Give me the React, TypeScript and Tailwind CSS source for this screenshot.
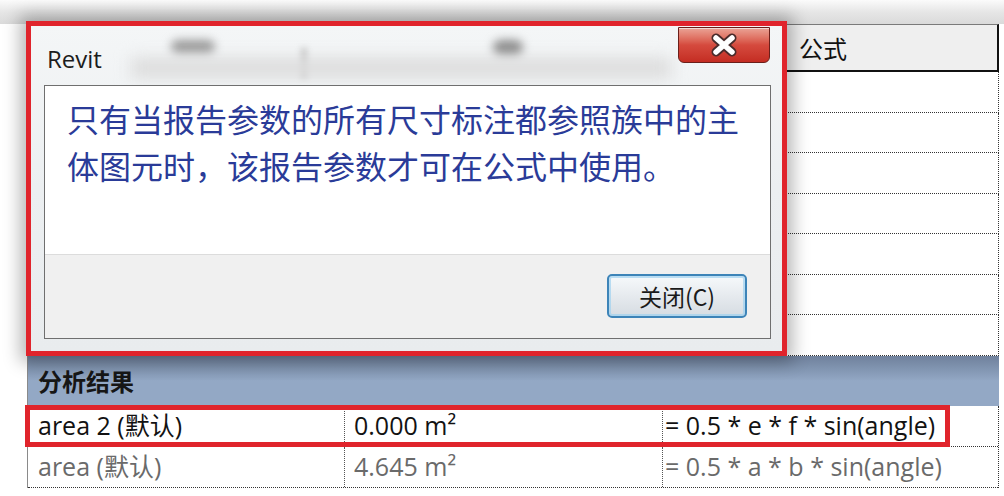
import React from "react"

const latin = "font-['Open_Sans','Noto_Sans_CJK_SC',sans-serif]"
const cjk = "font-['Noto_Sans_CJK_SC','Noto_Sans',sans-serif]"

const emptyRows = [0, 1, 2, 3, 4, 5, 6]

function ResultRow({ name, value, formula, muted }: { name: string; value: string; formula: string; muted?: boolean }) {
  const tone = muted ? "text-[#6a6a6a]" : "text-[#121212]"
  return (
    <div className={`flex h-[41px] border-b border-dotted border-[#333] ${latin} text-[25px] ${tone}`}>
      <div className="flex w-[317px] items-center border-r border-dotted border-[#555] pl-[10px]">{name}</div>
      <div className="flex w-[318px] items-center border-r border-dotted border-[#555] pl-[9px]">{value}</div>
      <div className="flex flex-1 items-center pl-[2px]">{formula}</div>
    </div>
  )
}

function CloseX() {
  return (
    <svg width="32" height="24" viewBox="0 0 32 24">
      <path d="M8 5 L24 19 M24 5 L8 19" stroke="#4a2b2b" strokeWidth="9" strokeLinecap="round" />
      <path d="M8 5 L24 19 M24 5 L8 19" stroke="#ffffff" strokeWidth="5.5" strokeLinecap="round" />
    </svg>
  )
}

function Dialog() {
  return (
    <div className="absolute left-[26px] top-[21px] h-[335px] w-[761px] border-[5px] border-[#e0242c] shadow-[0_0_16px_6px_rgba(0,0,0,0.28)]">
      <div className="flex h-full flex-col bg-gradient-to-b from-[#f4f6f7] via-[#eceff1] to-[#e9ecee]">
        {/* glass title bar */}
        <div className="relative flex h-[59px] items-start justify-between overflow-hidden">
          <div className="absolute left-[140px] top-[14px] h-[14px] w-[44px] rounded-full bg-[#9a9a9a] blur-[5px]" />
          <div className="absolute left-[270px] top-[22px] h-[30px] w-[6px] bg-[#c4c4c4] blur-[3px]" />
          <div className="absolute left-[462px] top-[14px] h-[16px] w-[30px] rounded-full bg-[#8c8c8c] blur-[5px]" />
          <div className="absolute left-[100px] top-[32px] h-[20px] w-[540px] bg-[#dcdcdc] blur-[8px]" />
          <span className={`relative ml-[16px] mt-[15px] text-[24px] text-[#1c1c1c] ${latin}`}>Revit</span>
          <div className="relative mr-[12px] mt-[1px] flex h-[36px] w-[92px] items-center justify-center rounded-b-[6px] border border-[#6b1f1a] bg-gradient-to-b from-[#eaa396] via-[#d54a3e] to-[#c42c22] shadow-[inset_0_1px_0_rgba(255,255,255,0.6)]">
            <CloseX />
          </div>
        </div>
        <div className="mx-[13px] mr-[11px] flex flex-1 flex-col border border-[#6f6f6f]">
          <div className={`h-[168px] bg-white pl-[22px] pt-[9px] text-[32px] leading-[47px] text-[#2a3b98] ${cjk}`}>
            <div>只有当报告参数的所有尺寸标注都参照族中的主</div>
            <div>体图元时，该报告参数才可在公式中使用。</div>
          </div>
          <div className="flex flex-1 items-start justify-end border-t border-[#dcdcdc] bg-[#f0f0f0] pr-[23px] pt-[19px]">
            <div className="flex h-[44px] w-[140px] items-center justify-center rounded-[5px] border-[2px] border-[#3d84b8] bg-gradient-to-b from-[#f6f9fb] via-[#e6eaee] to-[#d6dce2] shadow-[inset_0_0_0_2px_rgba(160,210,240,0.7)]">
              <span className={`text-[23px] text-[#1a1a1a] ${cjk}`}>关闭(C)</span>
            </div>
          </div>
        </div>
        <div className="h-[12px]" />
      </div>
    </div>
  )
}

export default function App() {
  return (
    <div className="relative h-[496px] w-[1004px] overflow-hidden bg-white">
      <div className="h-[24px] bg-gradient-to-b from-[#fbfbfb] via-[#e6e6e6] to-[#dadada]" />
      <div className="ml-[27px] w-[972px] border-l border-[#8a8a8a]">
        {/* header */}
        <div className="flex h-[48px] border-t border-b-[2px] border-r-[2px] border-t-[#7a7a7a] border-b-[#111] border-r-[#111] bg-[#efefef]">
          <div className="w-[771px]" />
          <div className={`flex items-center text-[24px] text-[#111] ${cjk}`}>公式</div>
        </div>
        {emptyRows.map((i) => (
          <div key={i} className="h-[40.5px] border-b border-r border-dotted border-[#333]" />
        ))}
        {/* group */}
        <div className="flex h-[50px] items-center bg-gradient-to-b from-[#6f819c] via-[#93a8c5] to-[#93a8c5] pl-[10px]">
          <span className={`text-[24px] font-bold text-[#161616] ${cjk}`}>分析结果</span>
        </div>
        <div className="border-r border-dotted border-[#333]">
          <ResultRow name="area 2 (默认)" value="0.000 m²" formula="= 0.5 * e * f * sin(angle)" />
          <ResultRow name="area (默认)" value="4.645 m²" formula="= 0.5 * a * b * sin(angle)" muted />
        </div>
      </div>

      <div className="absolute left-[25px] top-[405px] h-[42px] w-[925px] border-[5px] border-[#e0242c]" />
      <Dialog />
    </div>
  )
}
